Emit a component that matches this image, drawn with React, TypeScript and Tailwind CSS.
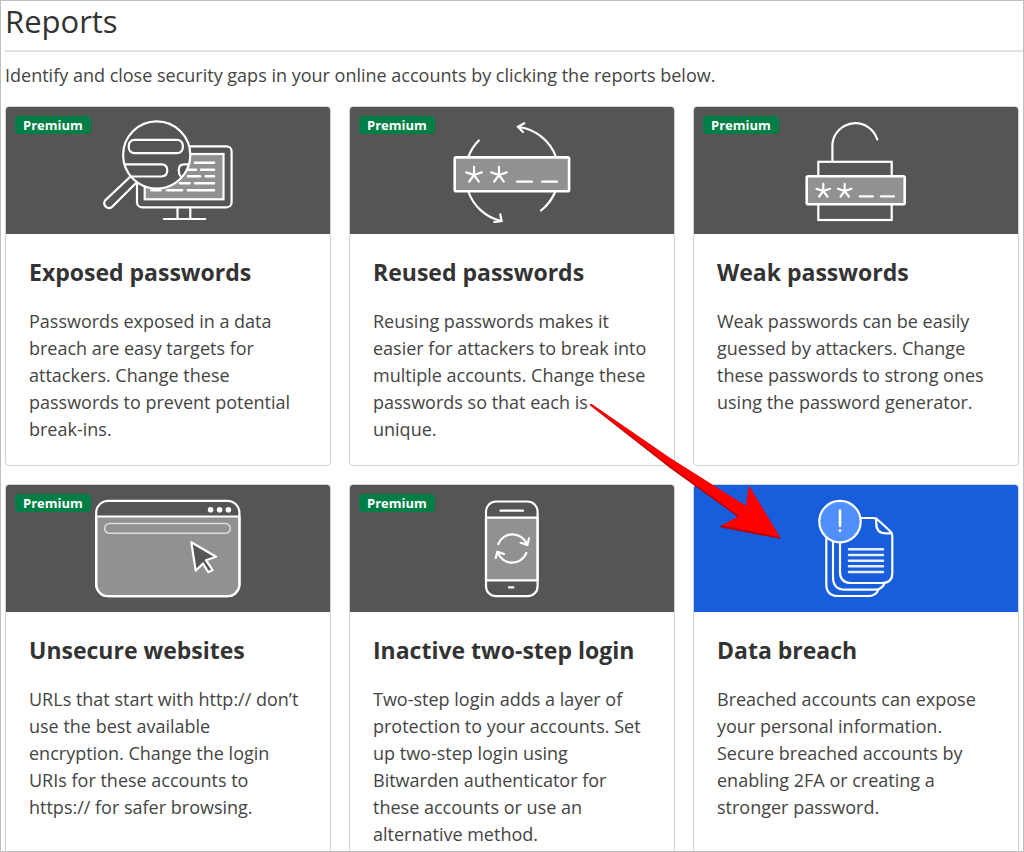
import type { ReactNode } from 'react'

interface Report {
  title: string
  description: string
  href: string
  icon: ReactNode
  premium?: boolean
}

interface ReportCardProps {
  report: Report
}

function Banner({ children }: { children: ReactNode }) {
  return (
    <svg
      viewBox="0 0 160 127"
      className="w-40 h-[127px]"
      fill="none"
      stroke="#fff"
      strokeWidth="2.2"
      strokeLinecap="round"
      strokeLinejoin="round"
      aria-hidden="true"
    >
      {children}
    </svg>
  )
}

function ExposedIcon() {
  return (
    <Banner>
      <rect x="49" y="39.3" width="94.6" height="61" rx="5" />
      <rect x="56.7" y="47" width="78.8" height="45.3" fill="#919191" strokeLinejoin="miter" />
      <path d="M89.5 100.5V112M102.3 100.5V112M75.8 112H117.2" />
      <path d="M107 55.7H126M100 62.7H108M113 62.7H126M100 69.3H112M117.8 69.3H126M92 76.3H101.5M107 76.3H126M63.5 83.3H72.5M79 83.3H94M99.8 83.3H126" strokeWidth="2.6" />
      <circle cx="68.7" cy="48" r="33.6" fill="#555" />
      <rect x="40.8" y="32.8" width="54" height="13.4" rx="5.5" />
      <path d="M36.6 57.3H73.5Q79.3 57.3 79.3 63.3T73.5 69.5H43.1" />
      <path d="M100.3 57.3H96Q90.7 57.3 90.7 63.3Q90.7 67.5 93 70" />
      <path d="M42.5 69.5L17.2 93.4A4.8 4.8 0 0 0 23.7 100.2L48 76" />
    </Banner>
  )
}

function ReusedIcon() {
  return (
    <Banner>
      <path d="M36.3 50A46 46 0 0 1 46.8 33.5M124 50A46 46 0 0 0 87 20M36.3 84.5A46 46 0 0 0 69 114M123.3 84.5A46 46 0 0 1 109 103.5" />
      <path d="M92.3 16.3L86 19.7L91 24.9M68.3 107.3L69.6 114L62.3 115" strokeLinejoin="miter" />
      <rect x="22.7" y="50.4" width="114.4" height="33.8" rx="1.5" fill="#919191" strokeWidth="2.6" />
      <path d="M42 68V59.8M42 68L34.2 65.4M42 68L49.8 65.4M42 68L37.2 74.6M42 68L46.8 74.6" />
      <path d="M67 68V59.8M67 68L59.2 65.4M67 68L74.8 65.4M67 68L62.2 74.6M67 68L71.8 74.6" />
      <path d="M85 74.7H100M110 74.7H125" />
    </Banner>
  )
}

function WeakIcon() {
  return (
    <Banner>
      <path d="M56.4 54V37A23 23 0 0 1 101.3 32.5" />
      <rect x="42.3" y="54.8" width="73.4" height="58.2" strokeLinejoin="miter" />
      <rect x="30.7" y="69.2" width="98" height="28" rx="1.5" fill="#919191" strokeWidth="2.6" />
      <path d="M47.3 84V76.9M47.3 84L40.5 81.8M47.3 84L54.1 81.8M47.3 84L43.1 89.7M47.3 84L51.5 89.7" />
      <path d="M68.7 84V76.9M68.7 84L61.9 81.8M68.7 84L75.5 81.8M68.7 84L64.5 89.7M68.7 84L72.9 89.7" />
      <path d="M83.8 89.4H96.8M105 89.4H118" />
    </Banner>
  )
}

function UnsecureIcon() {
  return (
    <Banner>
      <path d="M8.2 31.5H151.5V99.2A12 12 0 0 1 139.5 111.2H20.2A12 12 0 0 1 8.2 99.2Z" fill="#919191" />
      <rect x="8.2" y="15.8" width="143.2" height="95.4" rx="12" />
      <g fill="#fff" stroke="none">
        <circle cx="122.6" cy="24.8" r="2.8" />
        <circle cx="131.6" cy="24.8" r="2.8" />
        <circle cx="140.4" cy="24.8" r="2.8" />
      </g>
      <rect x="16.7" y="38.5" width="125.6" height="9.8" rx="4.9" stroke="#dcdcdc" strokeWidth="1.5" />
      <path d="M103.3 57.3L128.1 71.7L118 75.3L124.6 85L120.3 87.2L115 78.5L107.7 85.7Z" fill="#555" />
    </Banner>
  )
}

function TwoStepIcon() {
  return (
    <Banner>
      <path d="M54 32.6H105.6V95.3H54Z" fill="#919191" />
      <rect x="54" y="16.5" width="51.6" height="94.7" rx="10" />
      <path d="M68.5 25.7H91M77 102.4H81.3" />
      <path d="M66.3 59A15.2 15.2 0 0 1 94.8 59.5M94.3 68A15.2 15.2 0 0 1 65.8 67.5" />
      <path d="M97 53.2L95.4 60L88.6 57.8M63.7 73L65.3 66.8L72 69" />
    </Banner>
  )
}

function BreachIcon() {
  return (
    <Banner>
      <path d="M50.3 52V99Q50.3 111 62 111H92Q100 111 102.3 104.8" />
      <path d="M57 55V92Q57 104.7 69 104.7H99Q106 104.7 108.6 98.2" />
      <path d="M84 33H97Q100 33 102 35L113.5 45.5Q116.3 48 116.3 51V88Q116.3 98 106 98H75Q64 98 64 87V56" />
      <path d="M100.2 33.5V38Q100.2 48.4 110 48.4H115.5" />
      <path d="M73 64.3H107M73 70H107M73 75.7H107M73 81.3H107M73 87H107" stroke="#e8effc" strokeWidth="2.6" />
      <circle cx="64" cy="36.6" r="20.7" fill="#518ffd" />
      <path d="M64 25.5V41M64 45.6V45.8" strokeWidth="2.6" />
    </Banner>
  )
}

const reports: Report[] = [
  {
    title: 'Exposed passwords',
    description:
      'Passwords exposed in a data breach are easy targets for attackers. Change these passwords to prevent potential break-ins.',
    href: '#exposed-passwords',
    icon: <ExposedIcon />,
    premium: true,
  },
  {
    title: 'Reused passwords',
    description:
      'Reusing passwords makes it easier for attackers to break into multiple accounts. Change these passwords so that each is unique.',
    href: '#reused-passwords',
    icon: <ReusedIcon />,
    premium: true,
  },
  {
    title: 'Weak passwords',
    description:
      'Weak passwords can be easily guessed by attackers. Change these passwords to strong ones using the password generator.',
    href: '#weak-passwords',
    icon: <WeakIcon />,
    premium: true,
  },
  {
    title: 'Unsecure websites',
    description:
      'URLs that start with http:// don’t use the best available encryption. Change the login URIs for these accounts to https:// for safer browsing.',
    href: '#unsecure-websites',
    icon: <UnsecureIcon />,
    premium: true,
  },
  {
    title: 'Inactive two-step login',
    description:
      'Two-step login adds a layer of protection to your accounts. Set up two-step login using Bitwarden authenticator for these accounts or use an alternative method.',
    href: '#inactive-two-step-login',
    icon: <TwoStepIcon />,
    premium: true,
  },
  {
    title: 'Data breach',
    description:
      'Breached accounts can expose your personal information. Secure breached accounts by enabling 2FA or creating a stronger password.',
    href: '#data-breach',
    icon: <BreachIcon />,
  },
]

function ReportCard({ report }: ReportCardProps) {
  const { title, description, href, icon, premium } = report
  return (
    <a
      href={href}
      className="relative flex flex-col overflow-hidden rounded border border-[#ced4dc] bg-white"
    >
      <div className={`flex justify-center ${premium ? 'bg-[#555555]' : 'bg-[#175ddc]'}`}>
        {icon}
      </div>
      {premium && (
        <span className="absolute left-[9px] top-[9px] rounded bg-[#017e45] px-2 text-[13px] leading-[18px] font-bold text-white">
          Premium
        </span>
      )}
      <div className="px-[23px] pt-[23px] pb-[22px]">
        <h2 className="mb-[21px] text-[23px] leading-[30px] font-bold">{title}</h2>
        <p className="text-[18px] leading-[27px] text-[#444444]">{description}</p>
      </div>
    </a>
  )
}

// Callout arrow that points at the data breach card
function PointerArrow() {
  return (
    <svg
      viewBox="0 0 196 140"
      className="pointer-events-none absolute left-[587px] top-[401px] w-[196px] h-[140px]"
      aria-hidden="true"
    >
      <path d="M1.5 3L3.5 2L82 56L158 104L161 84L193 137L131 125L150 115L82 66Z" fill="#b80000" />
      <path d="M1.5 2.5L3.5 2L82 56L158 104L161 84L192 135L134 123.5L151 114L82 64Z" fill="#ff0000" />
    </svg>
  )
}

function App() {
  return (
    <main className="h-screen overflow-y-auto border border-[#bfbfbf] bg-white font-['Open_Sans','Noto_Sans',sans-serif] text-[#333333] [scrollbar-width:none]">
      <div className="relative pl-1">
        <h1 className="mb-[10px] border-b-2 border-[#dee2e6] pb-[9px] text-[31px] leading-10">
          Reports
        </h1>
        <p className="mb-[17px] text-[18px] leading-[27px] text-[#444444]">
          Identify and close security gaps in your online accounts by clicking the reports below.
        </p>
        <div className="grid grid-cols-3 gap-[18px] pr-1 pb-[18px]">
          {reports.map((report) => (
            <ReportCard key={report.title} report={report} />
          ))}
        </div>
        <PointerArrow />
      </div>
    </main>
  )
}

export default App
